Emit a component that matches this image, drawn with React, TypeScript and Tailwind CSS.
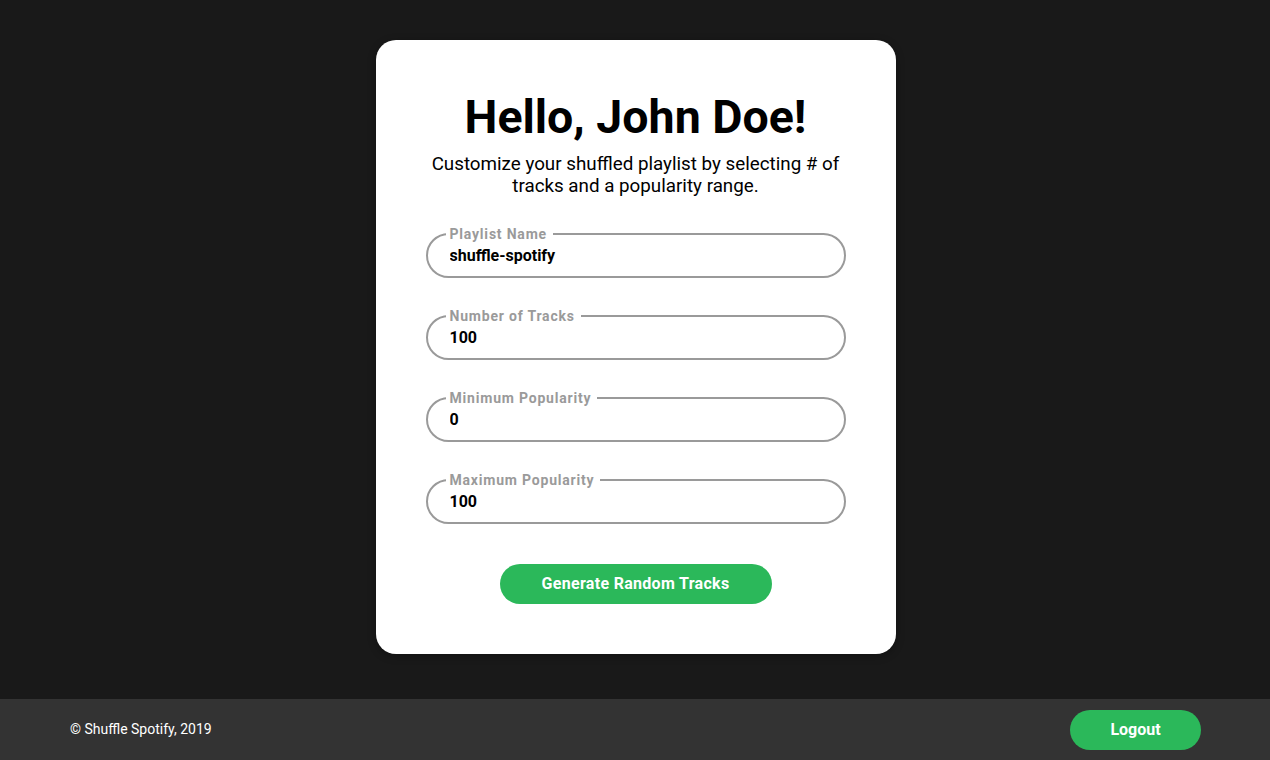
import React from "react";

const fields = [
  { label: "Playlist Name", value: "shuffle-spotify" },
  { label: "Number of Tracks", value: "100" },
  { label: "Minimum Popularity", value: "0" },
  { label: "Maximum Popularity", value: "100" },
];

export default function App() {
  return (
    <div
      className="h-screen flex flex-col bg-[#191919]"
      style={{ fontFamily: "Roboto, 'Liberation Sans', sans-serif" }}
    >
      <main className="flex-1 flex justify-center items-start pt-[40px] pl-[1px]">
        <div className="w-[520px] bg-white rounded-[20px] px-[50px] pt-[49px] pb-[50px] flex flex-col items-center shadow-[0_2px_8px_rgba(0,0,0,0.3)]">
          <h1 className="text-[46.5px] leading-[56px] font-bold text-black">Hello, John Doe!</h1>
          <p className="mt-[8px] text-[18.8px] leading-[22px] text-black text-center">
            Customize your shuffled playlist by selecting # of tracks and a popularity range.
          </p>
          <div className="mt-[29px] w-full flex flex-col gap-[30px]">
            {fields.map((f) => (
              <fieldset
                key={f.label}
                className="w-full border-2 border-[#9a9a9a] rounded-full pl-[18px] pr-[18px] pt-[2px] pb-[8px]"
              >
                <legend className="pl-1 pr-1.5 text-[14px] leading-[16px] font-bold text-[#9a9a9a] tracking-[0.8px]">
                  {f.label}
                </legend>
                <input
                  readOnly
                  value={f.value}
                  className="w-full h-[20px] pl-1 text-[16px] leading-[20px] font-bold text-black bg-transparent outline-none"
                />
              </fieldset>
            ))}
          </div>
          <button className="mt-[40px] w-[272px] h-[40px] rounded-full bg-[#2bb85a] text-white text-[16px] font-bold tracking-[0.3px]">
            Generate Random Tracks
          </button>
        </div>
      </main>
      <footer className="h-[61px] bg-[#333333] flex items-center justify-between pl-[70px] pr-[69px]">
        <span className="text-[14px] text-white">© Shuffle Spotify, 2019</span>
        <button className="w-[131px] h-[40px] rounded-full bg-[#2bb85a] text-white text-[16px] font-bold">
          Logout
        </button>
      </footer>
    </div>
  );
}
